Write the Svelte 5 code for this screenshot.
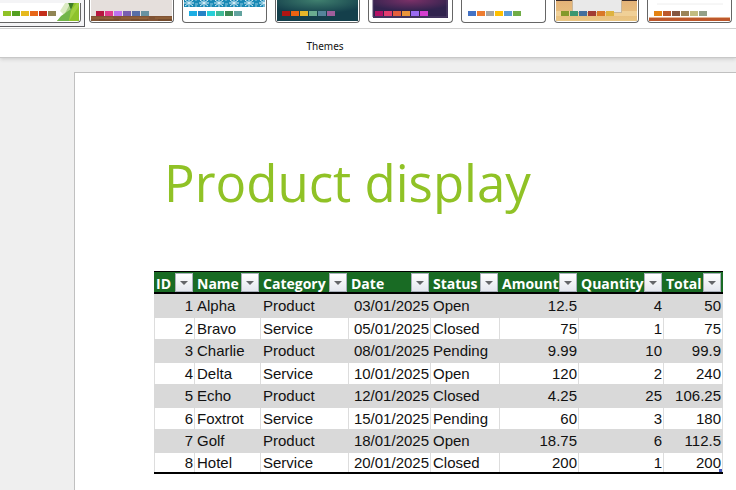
<script lang="ts">
    interface Theme {
        name: string;
        colors: string[];
    }

    interface Product {
        id: number;
        name: string;
        category: string;
        date: string;
        status: string;
        amount: number;
        quantity: number;
        total: number;
    }

    const themes: Theme[] = [
        { name: "Facet", colors: ["#90c226", "#54a021", "#e6b91e", "#e76618", "#c42f1a", "#918655"] },
        { name: "Gallery", colors: ["#b7173f", "#e03d8b", "#bc72f0", "#795faf", "#586ea6", "#6892a0"] },
        { name: "Integral", colors: ["#1cade4", "#2683c6", "#27ced7", "#42ba97", "#3e8853", "#62a39f"] },
        { name: "Ion", colors: ["#b01513", "#ea6312", "#e6b729", "#6aac90", "#54849a", "#9e5e9b"] },
        { name: "Ion Boardroom", colors: ["#b31166", "#e33d6f", "#e45f3c", "#e9943a", "#9b6bf2", "#d53dd0"] },
        { name: "Office", colors: ["#4472c4", "#ed7d31", "#a5a5a5", "#ffc000", "#5b9bd5", "#70ad47"] },
        { name: "Organic", colors: ["#83992a", "#3c9770", "#44709d", "#a23c33", "#d97828", "#deb340"] },
        { name: "Retrospect", colors: ["#e48312", "#bd582c", "#865640", "#9b8357", "#c2bc80", "#94a088"] },
    ];

    const columns = ["ID", "Name", "Category", "Date", "Status", "Amount", "Quantity", "Total"];

    const products: Product[] = [
        { id: 1, name: "Alpha", category: "Product", date: "03/01/2025", status: "Open", amount: 12.5, quantity: 4, total: 50 },
        { id: 2, name: "Bravo", category: "Service", date: "05/01/2025", status: "Closed", amount: 75, quantity: 1, total: 75 },
        { id: 3, name: "Charlie", category: "Product", date: "08/01/2025", status: "Pending", amount: 9.99, quantity: 10, total: 99.9 },
        { id: 4, name: "Delta", category: "Service", date: "10/01/2025", status: "Open", amount: 120, quantity: 2, total: 240 },
        { id: 5, name: "Echo", category: "Product", date: "12/01/2025", status: "Closed", amount: 4.25, quantity: 25, total: 106.25 },
        { id: 6, name: "Foxtrot", category: "Service", date: "15/01/2025", status: "Pending", amount: 60, quantity: 3, total: 180 },
        { id: 7, name: "Golf", category: "Product", date: "18/01/2025", status: "Open", amount: 18.75, quantity: 6, total: 112.5 },
        { id: 8, name: "Hotel", category: "Service", date: "20/01/2025", status: "Closed", amount: 200, quantity: 1, total: 200 },
    ];

    let selected = $state("Facet");
</script>

<div class="app">
    <header class="ribbon">
        <div class="gallery">
            {#each themes as theme}
                <button
                    class="theme"
                    class:selected={selected === theme.name}
                    aria-label={theme.name}
                    onclick={() => (selected = theme.name)}
                >
                    <svg width="81" height="21" viewBox="0 0 81 21">
                        {#if theme.name === "Facet"}
                            <path d="M59 21 72 9 77 0h4v21z" fill="#8ec22b" />
                            <path d="M62 11 69 0h3l1 8-7 7z" fill="#dcebc4" />
                            <path d="M66 15 72 4l2 5-12 9z" fill="#a9cf86" />
                            <path d="M69 0h8l-4 10z" fill="#3f7e27" />
                            <path d="M59 21 63 16 73 9 71 21z" fill="#72b54a" />
                            <path d="M73 11 81 0v6L71 21z" fill="#a0d040" />
                        {:else if theme.name === "Gallery"}
                            <rect width="81" height="21" fill="#e5dfdc" />
                            <rect y="16" width="81" height="5" fill="#805334" />
                            <path d="M0 18h22m8 0h28m6 0h17M14 19h9m25 0h8" stroke="#99683b" />
                            <path d="M8 20h20m12 0h17m10 0h14" stroke="#6b4629" />
                        {:else if theme.name === "Integral"}
                            <rect width="81" height="7" fill="#1989b5" />
                            {#each [0, 1, 2, 3, 4, 5] as i}
                                <path
                                    d="M{5 + i * 15} 0v7m-5-4h10m-9-3 8 6m0-6-8 6"
                                    stroke="#d9eef6"
                                    fill="none"
                                />
                                <path d="M{12 + i * 15} 0v1m0 4v2m-1-3h3" stroke="#8fcbe2" />
                            {/each}
                        {:else if theme.name === "Ion"}
                            <defs>
                                <radialGradient id="ion" cx="50%" cy="0%" r="65%">
                                    <stop offset="0" stop-color="#40806f" />
                                    <stop offset="1" stop-color="#143f4b" />
                                </radialGradient>
                            </defs>
                            <rect width="81" height="21" fill="url(#ion)" />
                        {:else if theme.name === "Ion Boardroom"}
                            <defs>
                                <radialGradient id="boardroom" cx="50%" cy="0%" r="60%">
                                    <stop offset="0" stop-color="#7c3168" />
                                    <stop offset="1" stop-color="#31234e" />
                                </radialGradient>
                            </defs>
                            <rect x="3" width="75" height="18" fill="url(#boardroom)" />
                            <path d="M3 0v17h74V0" stroke="#54456c" fill="none" />
                        {:else if theme.name === "Organic"}
                            <defs>
                                <linearGradient id="organic" x2="0" y2="1">
                                    <stop offset="0" stop-color="#e3b177" />
                                    <stop offset="1" stop-color="#eac683" />
                                </linearGradient>
                            </defs>
                            <rect width="81" height="21" fill="url(#organic)" />
                            <rect y="11" width="81" height="5" fill="#f0d097" />
                            <path d="M0 0h16v1H0zm65 0h16v1H65z" fill="#3a2a28" />
                            <rect x="16" width="50" height="13" fill="#c9b79c" />
                            <rect x="17" width="48" height="12" fill="#e9e9e9" />
                        {:else if theme.name === "Retrospect"}
                            <path d="M8 4h66" stroke="#eeeeee" />
                            <rect y="17" width="81" height="1" fill="#e5b391" />
                            <rect y="18" width="81" height="3" fill="#bd582c" />
                        {/if}
                        {#each theme.colors as color, i}
                            <rect x={5 + i * 9} y="11" width="8" height="5" fill={color} />
                        {/each}
                    </svg>
                </button>
            {/each}
        </div>
        <div class="group-name">Themes</div>
    </header>

    <main class="slide">
        <h1>Product display</h1>
        <table>
            <thead>
                <tr>
                    {#each columns as column}
                        <th class={column.toLowerCase()}>
                            <div class="heading">
                                {column}
                                <button class="filter" aria-label="Filter {column}">
                                    <svg width="8" height="4" viewBox="0 0 8 4">
                                        <path d="M0 0h8L4 4z" fill="#646669" />
                                    </svg>
                                </button>
                            </div>
                        </th>
                    {/each}
                </tr>
            </thead>
            <tbody>
                {#each products as product}
                    <tr>
                        <td class="number">{product.id}</td>
                        <td>{product.name}</td>
                        <td>{product.category}</td>
                        <td class="number">{product.date}</td>
                        <td>{product.status}</td>
                        <td class="number">{product.amount}</td>
                        <td class="number">{product.quantity}</td>
                        <td class="number">{product.total}</td>
                    </tr>
                {/each}
            </tbody>
        </table>
    </main>
</div>

<style>
    :global(body) {
        margin: 0;
        background: #efefef;
    }
    .app {
        min-height: 100vh;
        display: flex;
        flex-direction: column;
        overflow: hidden;
        background: #efefef;
        font-family: "Liberation Sans", sans-serif;
    }
    .ribbon {
        background: #fff;
        border-bottom: 1px solid #c8c8c8;
        box-shadow: 0 1px 4px #c8c8c8;
    }
    .gallery {
        display: flex;
        gap: 8px;
        height: 28px;
        margin-left: -4px;
        border-bottom: 1px solid #d0d0d0;
    }
    .theme {
        position: relative;
        flex: none;
        box-sizing: border-box;
        width: 85px;
        height: 23px;
        padding: 0 1px 1px;
        border: 1px solid #666;
        border-top: none;
        border-radius: 0 0 4px 4px;
        background: #fff;
    }
    .theme svg {
        display: block;
    }
    .theme.selected::after {
        content: "";
        position: absolute;
        inset: 0 -5px -5px;
        border: 1px solid #5c5c60;
        border-top: none;
        box-shadow: inset 0 0 0 3px #f4f4f6;
    }
    .group-name {
        width: 650px;
        padding: 14px 0 8px;
        text-align: center;
        font: 10px/6px "Noto Sans", sans-serif;
        color: #111;
    }
    .slide {
        flex: 1;
        margin: 14px 0 0 74px;
        padding: 77px 0 16px 79px;
        border: 1px solid #c0c0c0;
        border-width: 1px 0 0 1px;
        background: #fff;
    }
    h1 {
        margin: 0 0 57px 10px;
        font: 500 51px/64px "Open Sans", sans-serif;
        color: #90c226;
    }
    table {
        table-layout: fixed;
        width: 569px;
        border-spacing: 0;
        border-bottom: 2px solid #000;
        font-size: 15px;
        color: #111;
    }
    th {
        height: 20px;
        padding: 0 2px;
        border-top: 1px solid #000;
        border-bottom: 2px solid #000;
        background: #196b24;
        color: #fff;
        font: bold 14px/24px "Open Sans", sans-serif;
    }
    .id {
        width: 37px;
    }
    .name {
        width: 62px;
    }
    .category {
        width: 84px;
    }
    .date {
        width: 78px;
    }
    .status {
        width: 65px;
    }
    .amount {
        width: 75px;
    }
    .quantity {
        width: 81px;
    }
    .total {
        width: 55px;
    }
    .heading {
        display: flex;
        justify-content: space-between;
        height: 20px;
    }
    .filter {
        flex: none;
        display: flex;
        align-items: center;
        justify-content: center;
        box-sizing: border-box;
        width: 18px;
        height: 19px;
        margin-top: 1px;
        padding: 0;
        border: 1px solid #a9b0ba;
        background: linear-gradient(#fff, #e4e7ee);
    }
    td {
        height: 21px;
        padding: 0 1px 0 2px;
        border-right: 1px solid #ddd;
        line-height: 19px;
    }
    td:first-child {
        border-left: 1px solid #ddd;
    }
    tbody tr:nth-child(odd) td {
        height: 22px;
        padding-bottom: 2px;
        background: #d9d9d9;
        border-color: #d9d9d9;
    }
    tbody tr:last-child td {
        height: 19px;
    }
    tbody tr:last-child td:last-child {
        background: linear-gradient(#3f51b5, #3f51b5) right bottom / 3px 3px no-repeat;
    }
    .number {
        text-align: right;
    }
</style>
